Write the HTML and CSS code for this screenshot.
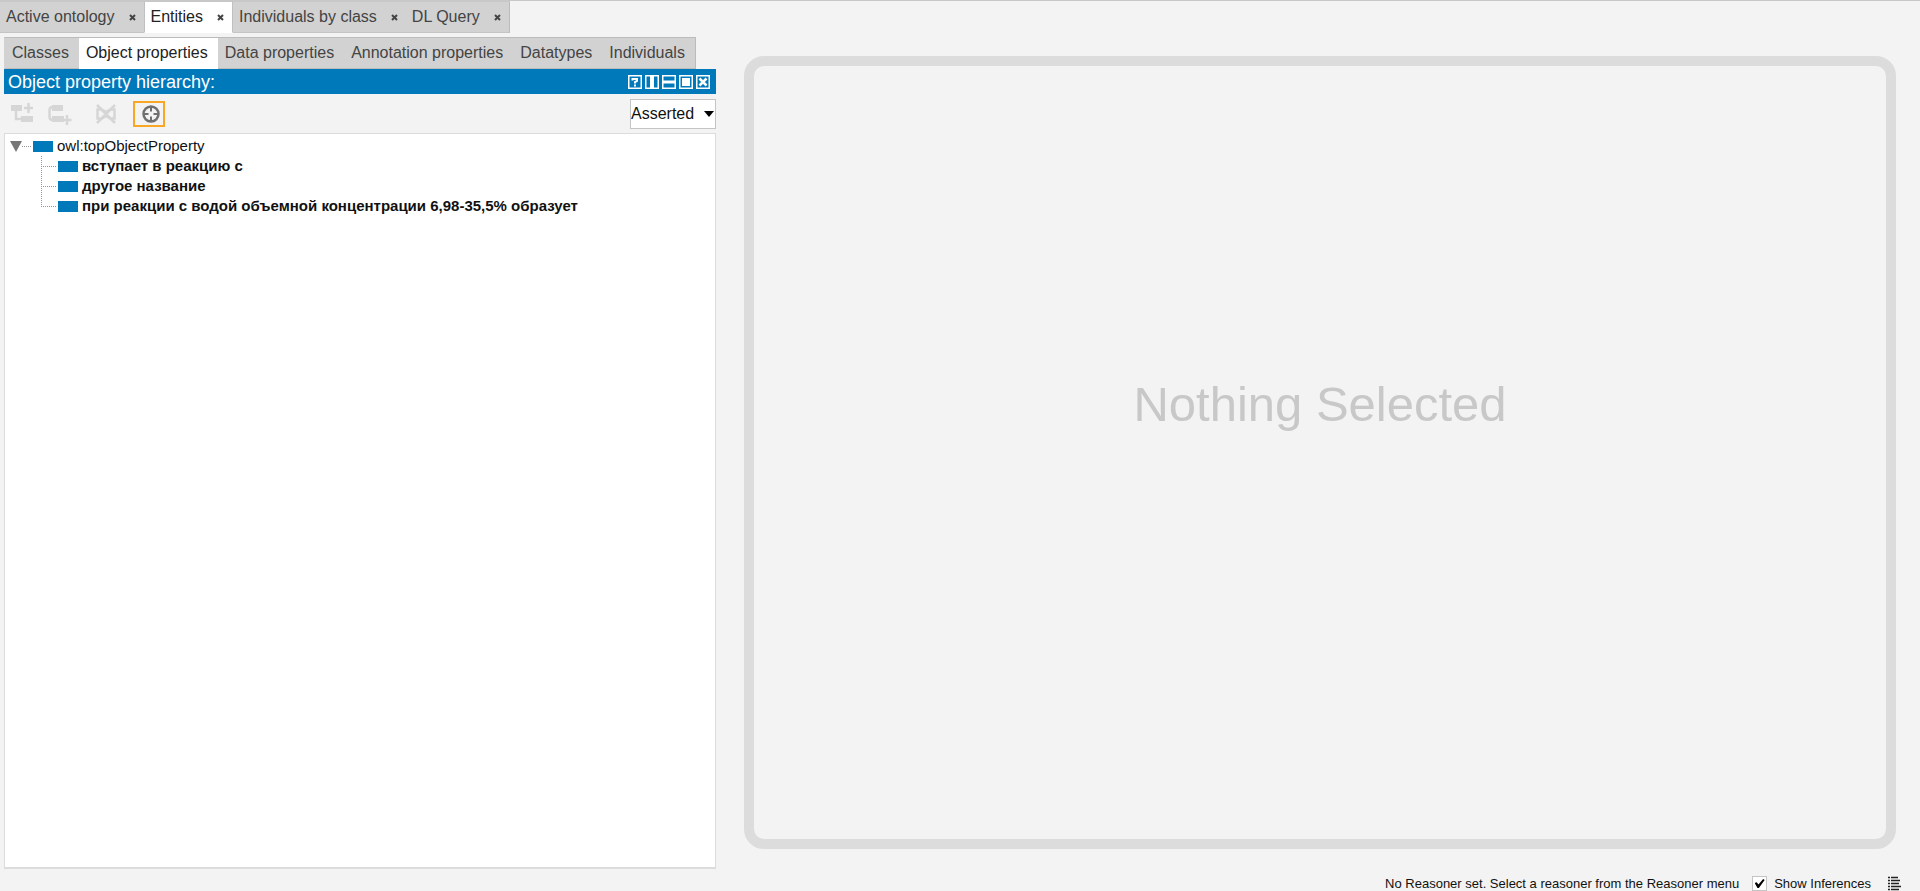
FILE: index.html
```html
<!DOCTYPE html>
<html lang="en">
<head>
<meta charset="utf-8">
<title>Ontology editor</title>
<link rel="stylesheet" href="styles.css">
</head>
<body>
<div class="app">
  <nav class="tabstrip" aria-label="Workspace tabs">
    <div class="tab"><button class="tab-label">Active ontology</button><button class="close" aria-label="Close Active ontology"><svg viewBox="0 0 7 7"><path d="M1 1L6 6M6 1L1 6"/></svg></button></div>
    <div class="tab selected"><button class="tab-label">Entities</button><button class="close" aria-label="Close Entities"><svg viewBox="0 0 7 7"><path d="M1 1L6 6M6 1L1 6"/></svg></button></div>
    <div class="tab"><button class="tab-label">Individuals by class</button><button class="close" aria-label="Close Individuals by class"><svg viewBox="0 0 7 7"><path d="M1 1L6 6M6 1L1 6"/></svg></button></div>
    <div class="tab"><button class="tab-label">DL Query</button><button class="close" aria-label="Close DL Query"><svg viewBox="0 0 7 7"><path d="M1 1L6 6M6 1L1 6"/></svg></button></div>
  </nav>
  <main class="workspace">
    <section class="browser">
      <nav class="subtabs" aria-label="Entity types">
        <button class="subtab">Classes</button>
        <button class="subtab selected">Object properties</button>
        <button class="subtab">Data properties</button>
        <button class="subtab">Annotation properties</button>
        <button class="subtab">Datatypes</button>
        <button class="subtab">Individuals</button>
      </nav>
      <header class="view-title">
        <h1>Object property hierarchy:</h1>
        <div class="view-buttons">
          <button aria-label="Help"><svg viewBox="0 0 14 14"><rect x=".75" y=".75" width="12.500" height="12.500"/><path stroke-width="2" d="M4.500 5.500V4H9V6L7 7V8.500M7 9.500V11.500"/></svg></button>
          <button aria-label="Split vertically"><svg viewBox="0 0 14 14"><rect x=".75" y=".75" width="12.500" height="12.500"/><path stroke-width="4" d="M7 1V13"/></svg></button>
          <button aria-label="Split horizontally"><svg viewBox="0 0 14 14"><rect x=".75" y=".75" width="12.500" height="12.500"/><path stroke-width="3" d="M1 7H13"/></svg></button>
          <button aria-label="Float"><svg viewBox="0 0 14 14"><rect x=".75" y=".75" width="12.500" height="12.500"/><path stroke-width="8" d="M3 7H11"/></svg></button>
          <button aria-label="Close view"><svg viewBox="0 0 14 14"><rect x=".75" y=".75" width="12.500" height="12.500"/><path stroke-width="2.500" d="M3.500 3.500L10.500 10.500M10.500 3.500L3.500 10.500"/></svg></button>
        </div>
      </header>
      <div class="toolbar">
        <button class="tool" aria-label="Add sub property" disabled><svg viewBox="0 0 24 22"><path d="M0 2H11V8H0ZM10 13H22V19H10Z" fill="currentColor"/><path d="M5 7V16H11M17.500 0V10M13 5H22" fill="none" stroke="currentColor" stroke-width="2.500"/></svg></button>
        <button class="tool" aria-label="Add sibling property" disabled><svg viewBox="0 0 24 22"><path d="M4 2H15V8H4ZM4 13H16V19H4Z" fill="currentColor"/><path d="M5 4Q1.500 4 1.500 7V14Q1.500 17 5 17M19 12V22M14.500 17H23.500" fill="none" stroke="currentColor" stroke-width="2.500"/></svg></button>
        <button class="tool delete" aria-label="Delete property" disabled><svg viewBox="0 0 24 22"><path d="M3.500 6.500H8L12 9L16 6.500H20.500V15.500H16L12 13L8 15.500H3.500ZM3 2L21 20M21 2L3 20" fill="none" stroke="currentColor" stroke-width="2.500"/></svg></button>
        <button class="tool focus" aria-label="Focus selection"><svg viewBox="0 0 20 20"><circle cx="10" cy="10" r="7.500" fill="none" stroke="currentColor" stroke-width="2.500"/><path d="M10 2V7.500M10 12.500V18M2 10H7.500M12.500 10H18" stroke="currentColor" stroke-width="2"/></svg></button>
        <div class="mode">
          <select aria-label="Hierarchy mode"><option>Asserted</option><option>Inferred</option></select>
          <svg viewBox="0 0 10 6"><path d="M0 0H10L5 6Z"/></svg>
        </div>
      </div>
      <div class="tree">
        <div class="node root"><button class="twisty" aria-label="Collapse"><svg viewBox="0 0 12 11"><path d="M0 0H12L6 11Z"/></svg></button><span class="dash"></span><span class="swatch"></span><span>owl:topObjectProperty</span></div>
        <ul class="children">
          <li class="node"><span class="swatch"></span><span>вступает в реакцию с</span></li>
          <li class="node"><span class="swatch"></span><span>другое название</span></li>
          <li class="node"><span class="swatch"></span><span>при реакции с водой объемной концентрации 6,98-35,5% образует</span></li>
        </ul>
      </div>
    </section>
    <section class="details"><p class="empty">Nothing Selected</p></section>
  </main>
  <footer class="status">
    <span>No Reasoner set. Select a reasoner from the Reasoner menu</span>
    <label class="inferences"><input type="checkbox" checked>Show Inferences</label>
    <button class="log" aria-label="Show log"><svg viewBox="0 0 13 15"><path d="M0 1.500H2M3 1.500H10M0 4.500H2M3 4.500H12M0 7.500H2M3 7.500H11M0 10.500H2M3 10.500H13M0 13.500H2M3 13.500H11"/></svg></button>
  </footer>
</div>
</body>
</html>
```

FILE: styles.css
```css
* { box-sizing: border-box; }
body {
  margin: 0;
  background: #f3f3f3;
  color: #111;
  font: 16px/20px "Liberation Sans", Arial, sans-serif;
}
button {
  border: 0;
  padding: 0;
  background: none;
  color: inherit;
  font: inherit;
}
svg { display: block; }

.app { display: flex; flex-direction: column; height: 100vh; border-top: 1px solid #c8c8c8; }

.tabstrip { display: flex; }
.tab {
  display: flex;
  align-items: center;
  gap: 14px;
  height: 32px;
  padding: 0 8px 0 6px;
  border-top: 1px solid #c8c8c8;
  border-bottom: 1px solid #c4c4c4;
  background: #d2d2d2;
  color: #444;
}
.tab:last-child { border-right: 1px solid #bbb; }
.tab.selected, .subtab.selected { background: #fff; border-bottom-color: #fff; color: #222; }
.tab.selected { border-left: 1px solid #c0c0c0; border-right: 1px solid #c0c0c0; }
.close { width: 7px; }
.close svg { width: 7px; height: 7px; fill: none; stroke: #444; stroke-width: 2; }

.workspace {
  display: grid;
  grid-template-columns: 712fr 1204fr;
  flex: 1;
  min-height: 0;
  padding: 4px 0 0 4px;
}
.browser { display: flex; flex-direction: column; min-width: 0; }
.subtabs { display: flex; align-self: flex-start; border: 1px solid #bbb; border-bottom: 0; border-left-color: #d2d2d2; }
.subtab {
  height: 31px;
  padding: 0 10px 0 7px;
  border-bottom: 1px solid #bbb;
  background: #d2d2d2;
  color: #444;
}

.view-title {
  display: flex;
  align-items: center;
  justify-content: space-between;
  height: 25px;
  padding: 0 6px 0 4px;
  background: #0079ba;
  color: #fff;
}
h1 { margin: 0; font-size: 18px; font-weight: 400; }
.view-buttons { display: flex; gap: 3px; }
.view-buttons svg { width: 14px; height: 14px; fill: none; stroke: #fff; stroke-width: 1.5; }

.toolbar { display: flex; align-items: center; height: 39px; padding-left: 7px; }
.tool { margin-right: 13px; color: #d6d6d6; }
.tool svg { width: 24px; height: 22px; }
.tool.delete { margin: 0 15px 0 9px; }
.tool.focus {
  display: grid;
  place-items: center;
  width: 32px;
  height: 26px;
  padding-left: 3px;
  border: 2px solid #f9a825;
  color: #707070;
}
.tool.focus svg { width: 20px; height: 20px; }
.mode { position: relative; width: 86px; margin-left: auto; }
.mode select {
  display: block;
  width: 100%;
  height: 30px;
  padding: 0;
  border: 1px solid #c4c4c4;
  border-radius: 0;
  appearance: none;
  background: #fff;
  color: #111;
  font: inherit;
}
.mode svg { position: absolute; right: 2px; top: 12px; width: 10px; height: 6px; pointer-events: none; }

.tree {
  flex: 1;
  padding-top: 2px;
  border: 1px solid #dcdcdc;
  border-bottom-width: 2px;
  background: #fff;
  font-size: 15px;
}
.node { display: flex; align-items: center; height: 20px; white-space: nowrap; }
.root { padding-left: 5px; }
.twisty svg { width: 12px; height: 11px; fill: #777; }
.dash { width: 9px; margin-right: 2px; border-top: 1px dotted #999; }
.swatch { width: 20px; height: 11px; margin-right: 4px; background: #0079ba; }
.children { margin: 0 0 0 36px; padding: 0; list-style: none; font-weight: 700; }
.children .node { position: relative; padding-left: 17px; }
.children .node::before {
  content: "";
  position: absolute;
  left: 0;
  top: -10px;
  width: 14px;
  height: 20px;
  border-left: 1px dotted #999;
  border-bottom: 1px dotted #999;
}
.children .node:first-child::before { top: 0; height: 10px; }

.details {
  display: grid;
  place-items: center;
  margin: 19px 24px 20px 28px;
  padding-bottom: 97px;
  border: 10px solid #dcdcdc;
  border-radius: 20px;
}
.empty { margin: 0; color: #c8c8c8; font-size: 49px; line-height: 56px; }

.status {
  display: flex;
  align-items: center;
  justify-content: flex-end;
  height: 22px;
  padding: 7px 19px 0 0;
  font-size: 13px;
  line-height: 15px;
}
.inferences { display: flex; align-items: center; gap: 7px; margin: 0 17px 0 13px; }
.inferences input {
  display: grid;
  place-items: center;
  width: 15px;
  height: 15px;
  margin: 0;
  border: 1px solid #c4c4c4;
  appearance: none;
  background: #fff;
}
.inferences input:checked::after {
  content: "";
  width: 10px;
  height: 9px;
  background: #000;
  clip-path: polygon(0 45%, 20% 35%, 38% 60%, 85% 0, 100% 10%, 42% 100%, 28% 100%);
}
.log svg { width: 13px; height: 15px; stroke: #222; stroke-width: 1.5; }
```
